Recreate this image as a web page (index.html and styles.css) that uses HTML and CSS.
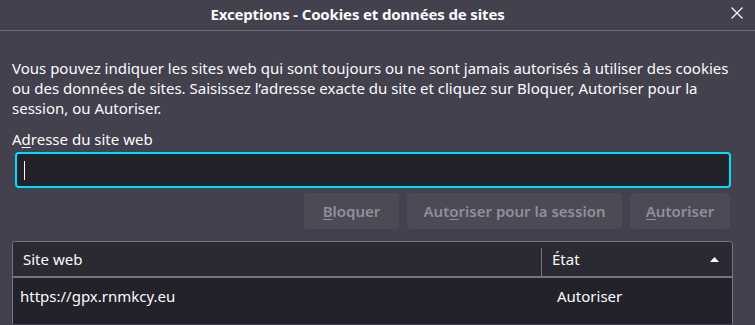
FILE: index.html
```html
<!DOCTYPE html>
<html lang="fr">
<head>
<meta charset="utf-8">
<title>Exceptions - Cookies et données de sites</title>
<link rel="stylesheet" href="styles.css">
</head>
<body>
<div class="titlebar">
  <span class="title">Exceptions - Cookies et données de sites</span>
  <span class="close-wrap">
    <svg class="close" width="12" height="12" viewBox="0 0 12 12"><path d="M0.5 0.5 L11.5 11.5 M11.5 0.5 L0.5 11.5" stroke="#fbfbfe" stroke-width="1.2" fill="none"/></svg>
  </span>
</div>
<div class="content">
  <p class="intro">Vous pouvez indiquer les sites web qui sont toujours ou ne sont jamais autorisés à utiliser des cookies ou des données de sites. Saisissez l’adresse exacte du site et cliquez sur Bloquer, Autoriser pour la session, ou Autoriser.</p>
  <label class="label" for="url">A<u>d</u>resse du site web</label>
  <div class="input"><span class="caret"></span></div>
  <div class="buttons">
    <button class="btn btn-block"><u>B</u>loquer</button>
    <button class="btn btn-session">Aut<u>o</u>riser pour la session</button>
    <button class="btn btn-allow"><u>A</u>utoriser</button>
  </div>
  <div class="table">
    <div class="thead">
      <div class="th th-site">Site web</div>
      <div class="th th-state"><span>État</span><svg class="sort" width="9" height="5" viewBox="0 0 9 5"><path d="M0 5 L4.5 0 L9 5 Z" fill="#fbfbfe"/></svg></div>
    </div>
    <div class="tbody">
      <div class="row">
        <div class="td td-site">https://gpx.rnmkcy.eu</div>
        <div class="td td-state">Autoriser</div>
      </div>
    </div>
  </div>
</div>
</body>
</html>
```

FILE: styles.css
```css
* { box-sizing: border-box; }
html, body { margin: 0; height: 100%; overflow: hidden; }
body {
  background: #42414d;
  color: #fbfbfe;
  font-family: "Noto Sans", "DejaVu Sans", sans-serif;
  font-size: 15px;
  line-height: 20px;
}
.titlebar {
  height: 31px;
  border-bottom: 1px solid #6e6d78;
  display: flex;
  align-items: center;
}
.title {
  flex: 1;
  text-align: center;
  font-weight: bold;
  font-size: 15px;
  letter-spacing: -0.15px;
  padding-bottom: 2px;
}
.close-wrap {
  width: 40px;
  display: flex;
  justify-content: flex-end;
  padding-right: 12px;
  padding-bottom: 5px;
}
.close { display: block; }
.content {
  padding: 27px 0 0 12px;
}
.intro {
  margin: 0;
  width: 728px;
}
.label {
  display: block;
  margin-top: 11px;
}
.label u, .btn u { text-decoration-thickness: 1px; text-underline-offset: 2px; }
.input {
  margin: 3px 0 0 3px;
  width: 716px;
  height: 36px;
  border: 2px solid #00ddff;
  border-radius: 4px;
  background: #23222b;
  display: flex;
  align-items: center;
  padding-left: 7px;
}
.caret {
  width: 1px;
  height: 19px;
  background: #fbfbfe;
}
.buttons {
  display: flex;
  justify-content: flex-end;
  gap: 8px;
  width: 718px;
  margin-top: 5px;
}
.btn {
  font: inherit;
  white-space: nowrap;
  height: 36px;
  border: 0;
  border-radius: 4px;
  background: #4b4a55;
  color: #8f8f9d;
  font-weight: 600;
  padding: 0;
}
.btn-block { width: 95px; }
.btn-session { width: 215px; }
.btn-allow { width: 100px; }
.table {
  margin-top: 12px;
  width: 721px;
  height: 83px;
  border: 1px solid #77767f;
  border-bottom: 0;
  border-radius: 4px 4px 0 0;
  overflow: hidden;
  background: #23222b;
}
.thead {
  display: flex;
  height: 36px;
  background: #2b2a33;
  border-bottom: 2px solid #77767f;
}
.th {
  display: flex;
  align-items: center;
}
.th-site {
  width: 529px;
  padding-left: 10px;
  position: relative;
}
.th-site::after {
  content: "";
  position: absolute;
  right: 0;
  top: 6px;
  bottom: -2px;
  width: 1px;
  background: #77767f;
}
.th-state {
  flex: 1;
  padding-left: 10px;
  padding-right: 13px;
  justify-content: space-between;
}
.sort { display: block; }
.row {
  display: flex;
  height: 36px;
  align-items: center;
}
.td-site { width: 536px; padding-left: 7px; }
.td-state { flex: 1; padding-left: 8px; }
```
